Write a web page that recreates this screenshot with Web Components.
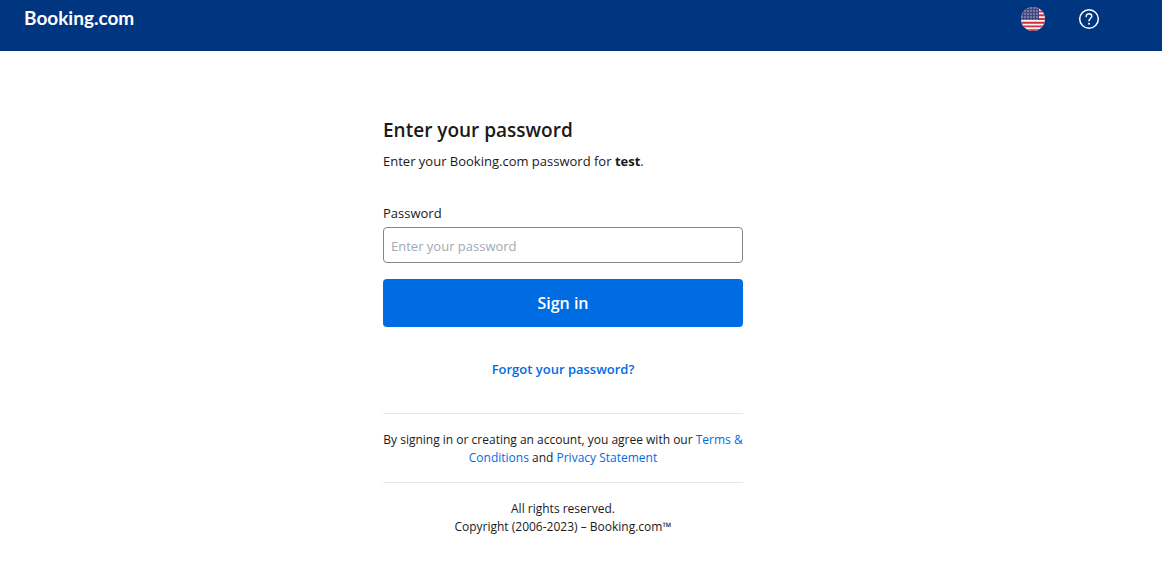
<!DOCTYPE html>
<html lang="en">
<head>
<meta charset="utf-8">
<meta name="viewport" content="width=device-width, initial-scale=1">
<title>Sign in</title>
<style>
    body {
        margin: 0;
        background: #fff;
        color: #1a1a1a;
        font: 13px/20px "Open Sans", "Noto Sans", sans-serif;
    }
</style>
</head>
<body>
<sign-in-page></sign-in-page>

<script>
class SiteHeader extends HTMLElement {
    constructor() {
        super();
        this.attachShadow({ mode: 'open' });
    }

    connectedCallback() {
        this.shadowRoot.innerHTML = `
            <style>
                :host {
                    display: block;
                    background: #003580;
                    color: #fff;
                }
                header {
                    display: flex;
                    align-items: flex-start;
                    justify-content: space-between;
                    padding: 0 61px 13px 24px;
                }
                .logo {
                    color: inherit;
                    font: bold 19px/36px Lato, sans-serif;
                    text-decoration: none;
                }
                nav {
                    display: flex;
                    align-items: center;
                    gap: 32px;
                    height: 38px;
                }
                button, .help {
                    display: block;
                    padding: 0;
                    border: 0;
                    background: none;
                    color: inherit;
                }
                svg {
                    display: block;
                }
            </style>
            <header>
                <a class="logo" href="#">Booking.com</a>
                <nav>
                    <button type="button" aria-label="Language">
                        <svg width="24" height="24" viewBox="0 0 24 24">
                            <defs>
                                <clipPath id="round"><circle cx="12" cy="12" r="12"/></clipPath>
                                <pattern id="stars" width="3" height="3" patternUnits="userSpaceOnUse">
                                    <circle cx="1" cy="1" r=".8" fill="#b5b6d2"/>
                                </pattern>
                            </defs>
                            <g clip-path="url(#round)">
                                <path fill="#f4f4f6" d="M0 0h24v24H0z"/>
                                <path stroke="#d02f44" stroke-width="1.9" d="M0 .9h24M0 4.6h24M0 8.3h24M0 12h24M0 15.7h24M0 19.4h24M0 23.1h24"/>
                                <path fill="#46467f" d="M0 0h18v13H0z"/>
                                <path fill="url(#stars)" d="M0 0h18v13H0z"/>
                            </g>
                        </svg>
                    </button>
                    <a class="help" href="#" aria-label="Help">
                        <svg width="24" height="24" viewBox="0 0 24 24" fill="none" stroke="#fff" stroke-width="1.5" stroke-linecap="round">
                            <circle cx="12" cy="12" r="9.3"/>
                            <path d="M9.2 9.4c0-1.6 1.2-2.7 2.8-2.7s2.8 1.1 2.8 2.6c0 2-2.8 2.4-2.8 4.5"/>
                            <circle cx="12" cy="16.7" r="1" fill="#fff" stroke="none"/>
                        </svg>
                    </a>
                </nav>
            </header>
        `;
    }
}
customElements.define('site-header', SiteHeader);

class PasswordForm extends HTMLElement {
    constructor() {
        super();
        this.attachShadow({ mode: 'open' });
    }

    connectedCallback() {
        this.shadowRoot.innerHTML = `
            <style>
                :host {
                    display: block;
                }
                form {
                    display: flex;
                    flex-direction: column;
                }
                label {
                    margin-bottom: 4px;
                    font-weight: 500;
                }
                input {
                    box-sizing: border-box;
                    height: 36px;
                    padding: 2px 7px 0;
                    border: 1px solid #868686;
                    border-radius: 4px;
                    background: #fff;
                    font: inherit;
                }
                input::placeholder {
                    color: #a2a9b4;
                    opacity: 1;
                }
                button {
                    height: 48px;
                    margin-top: 16px;
                    border: 0;
                    border-radius: 4px;
                    background: #006ce4;
                    color: #fff;
                    font: 600 16px/24px "Open Sans", "Noto Sans", sans-serif;
                }
                a {
                    align-self: center;
                    margin: 32px 0 34px;
                    color: #006ce4;
                    font-weight: 600;
                    text-decoration: none;
                }
            </style>
            <form>
                <label for="password">Password</label>
                <input id="password" type="password" placeholder="Enter your password">
                <button type="submit">Sign in</button>
                <a href="#">Forgot your password?</a>
            </form>
        `;
        this.shadowRoot.querySelector('form').addEventListener('submit', (event) => {
            event.preventDefault();
        });
    }
}
customElements.define('password-form', PasswordForm);

// One ruled block of small print
class LegalNote extends HTMLElement {
    constructor() {
        super();
        this.attachShadow({ mode: 'open' });
    }

    connectedCallback() {
        this.shadowRoot.innerHTML = `
            <style>
                :host {
                    display: block;
                    padding: 17px 0 15px;
                    border-top: 1px solid #e7e7e7;
                    font-size: 12px;
                    line-height: 18px;
                    text-align: center;
                }
                ::slotted(a) {
                    color: #006ce4;
                    text-decoration: none;
                }
            </style>
            <slot></slot>
        `;
    }
}
customElements.define('legal-note', LegalNote);

class SignInPage extends HTMLElement {
    constructor() {
        super();
        this.attachShadow({ mode: 'open' });
    }

    connectedCallback() {
        this.shadowRoot.innerHTML = `
            <style>
                :host {
                    display: block;
                }
                main {
                    display: flex;
                    justify-content: center;
                    padding: 66px 36px 24px 0;
                }
                .panel {
                    width: 100%;
                    max-width: 360px;
                }
                h1 {
                    margin: 0 0 8px;
                    font-size: 19px;
                    font-weight: 600;
                    line-height: 26px;
                }
                p {
                    margin: 0 0 32px;
                }
            </style>
            <site-header></site-header>
            <main>
                <div class="panel">
                    <h1>Enter your password</h1>
                    <p>Enter your Booking.com password for <b>test</b>.</p>
                    <password-form></password-form>
                    <legal-note>By signing in or creating an account, you agree with our <a href="#">Terms &amp; Conditions</a> and <a href="#">Privacy Statement</a></legal-note>
                    <legal-note>All rights reserved.<br>Copyright (2006-2023) – Booking.com™</legal-note>
                </div>
            </main>
        `;
    }
}
customElements.define('sign-in-page', SignInPage);
</script>
</body>
</html>
